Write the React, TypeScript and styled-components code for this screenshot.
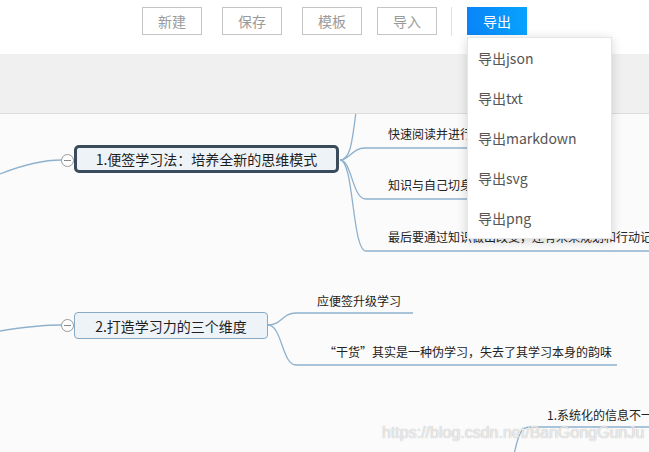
import React from "react";
import styled, { createGlobalStyle } from "styled-components";

const GlobalStyle = createGlobalStyle`
  html, body { margin: 0; padding: 0; background: #fbfbfb; }
  body { font-family: "Noto Sans CJK SC", "Noto Sans", sans-serif; width: 649px; height: 452px; overflow: hidden; }
`;

const Page = styled.div`
  position: relative;
  width: 649px;
  height: 452px;
  display: flex;
  flex-direction: column;
  overflow: hidden;
`;

const Header = styled.div`
  height: 54px;
  background: #ffffff;
  display: flex;
  align-items: flex-start;
  padding: 7px 0 0 142px;
  box-sizing: border-box;
  gap: 15px;
`;

const ButtonGroup = styled.div`
  display: flex;
  gap: 20px;
`;

const ToolButton = styled.div<{ $primary?: boolean }>`
  width: 60px;
  height: 28px;
  box-sizing: border-box;
  display: flex;
  align-items: center;
  justify-content: center;
  font-size: 14px;
  color: ${(p) => (p.$primary ? "#ffffff" : "#9a9a9a")};
  border: ${(p) => (p.$primary ? "none" : "1px solid #c4c4c4")};
  background: ${(p) => (p.$primary ? "linear-gradient(90deg, #0a84f8, #07a3fe)" : "#fff")};
`;

const Separator = styled.div`
  width: 1px;
  height: 29px;
  background: #e2e2e2;
  margin-left: -1px;
`;

const Band = styled.div`
  height: 59px;
  background: #f0f0f0;
  border-bottom: 1px solid #dcdcdc;
`;

const Canvas = styled.div`
  position: relative;
  flex: 1;
  background: #fbfbfb;
  overflow: hidden;
`;

const Lines = styled.svg`
  position: absolute;
  left: 0;
  top: 0;
`;

const Topic = styled.div<{ $x: number; $y: number; $w: number; $h: number; $active?: boolean }>`
  position: absolute;
  left: ${(p) => p.$x}px;
  top: ${(p) => p.$y}px;
  width: ${(p) => p.$w}px;
  height: ${(p) => p.$h}px;
  box-sizing: border-box;
  background: #eef3f7;
  border: ${(p) => (p.$active ? "3px solid #3a4c5c" : "1px solid #86a9c6")};
  border-radius: ${(p) => (p.$active ? 5 : 4)}px;
  display: flex;
  align-items: center;
  justify-content: center;
  font-size: 14px;
  color: #1e1e1e;
  white-space: nowrap;
`;

const Collapse = styled.div<{ $x: number; $y: number }>`
  position: absolute;
  left: ${(p) => p.$x - 6.5}px;
  top: ${(p) => p.$y - 6.5}px;
  width: 13px;
  height: 13px;
  box-sizing: border-box;
  border: 1px solid #999;
  border-radius: 50%;
  background: #fff;
  &::after {
    content: "";
    position: absolute;
    left: 2px;
    right: 2px;
    top: 5px;
    height: 1px;
    background: #888;
  }
`;

const Leaf = styled.div<{ $x: number; $y: number }>`
  position: absolute;
  left: ${(p) => p.$x}px;
  top: ${(p) => p.$y}px;
  font-size: 12px;
  line-height: 16px;
  color: #222;
  white-space: nowrap;
`;

const Watermark = styled.div`
  position: absolute;
  left: 382px;
  top: 309px;
  font-family: "Liberation Sans", Arial, sans-serif;
  font-size: 16px;
  line-height: 20px;
  color: rgba(255, 255, 255, 0.75);
  text-shadow: 0 0 1px rgba(150, 150, 150, 0.9);
  white-space: nowrap;
`;

const Menu = styled.div`
  position: absolute;
  left: 467px;
  top: 37px;
  width: 143px;
  background: #fff;
  border: 1px solid #e6e6e6;
  box-shadow: 0 2px 10px rgba(0, 0, 0, 0.16);
  display: flex;
  flex-direction: column;
  z-index: 10;
`;

const MenuItem = styled.div`
  height: 40px;
  display: flex;
  align-items: center;
  padding-left: 10px;
  font-size: 14px;
  color: #555;
`;

const stroke = "#8eb1ce";

export default function App() {
  const buttons = ["新建", "保存", "模板"];
  const menu = ["导出json", "导出txt", "导出markdown", "导出svg", "导出png"];
  return (
    <Page>
      <GlobalStyle />
      <Header>
        <ButtonGroup>
          {buttons.map((b) => (
            <ToolButton key={b}>{b}</ToolButton>
          ))}
        </ButtonGroup>
        <ToolButton>导入</ToolButton>
        <Separator />
        <ToolButton $primary>导出</ToolButton>
      </Header>
      <Band />
      <Canvas>
        <Lines width="649" height="338" viewBox="0 0 649 338" fill="none" stroke={stroke} strokeWidth="1.3">
          <path d="M0,60 C25,50 45,46 62,46" />
          <path d="M0,217 C25,213 45,211 62,211" />
          <path d="M340,46 C350,46 352,30 356,-2" />
          <path d="M340,46 C350,46 352,34 365,34 L600,34" />
          <path d="M340,46 C352,46 352,85 366,85 L600,85" />
          <path d="M340,46 C354,46 352,137 366,137 L649,137" />
          <path d="M268,211 C282,211 282,199 296,199 L413,199" />
          <path d="M268,211 C282,211 282,251 296,251 L617,251" />
          <path d="M514,340 C518,325 519,313 530,313 L649,313" />
        </Lines>
        <Collapse $x={67} $y={46} />
        <Topic $x={74} $y={31} $w={265} $h={28} $active>
          1.便签学习法：培养全新的思维模式
        </Topic>
        <Leaf $x={388} $y={12}>快速阅读并进行批注</Leaf>
        <Leaf $x={388} $y={63}>知识与自己切身相关</Leaf>
        <Leaf $x={388} $y={115}>最后要通过知识做出改变，还有未来规划和行动记录</Leaf>
        <Collapse $x={67} $y={211} />
        <Topic $x={74} $y={198} $w={194} $h={27}>
          2.打造学习力的三个维度
        </Topic>
        <Leaf $x={317} $y={179}>应便签升级学习</Leaf>
        <Leaf $x={324} $y={230}>“干货”其实是一种伪学习，失去了其学习本身的韵味</Leaf>
        <Leaf $x={547} $y={293}>1.系统化的信息不一定</Leaf>
        <Watermark>https://blog.csdn.net/BanGongGunJu</Watermark>
      </Canvas>
      <Menu>
        {menu.map((m) => (
          <MenuItem key={m}>{m}</MenuItem>
        ))}
      </Menu>
    </Page>
  );
}
